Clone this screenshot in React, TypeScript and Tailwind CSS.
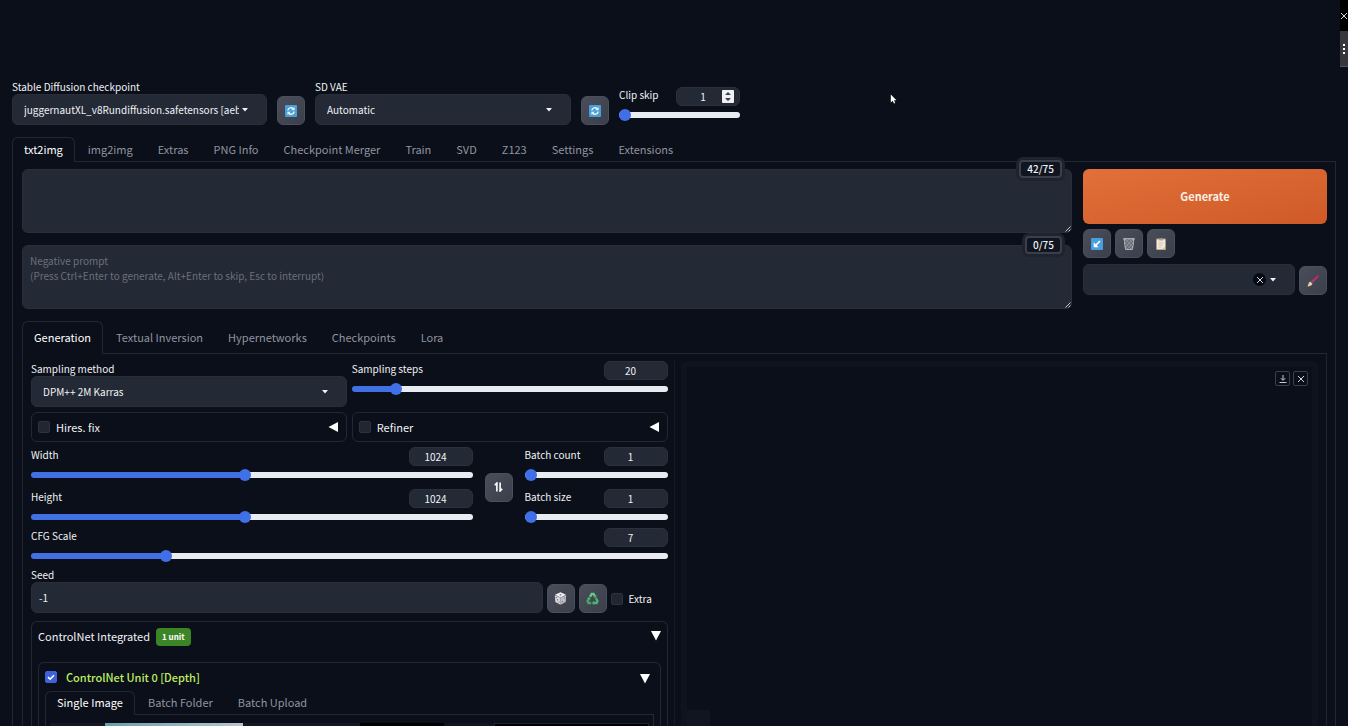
import { useId, useState } from "react";
import type { ReactNode } from "react";
import clsx from "clsx";

const mainTabs = [
  "txt2img",
  "img2img",
  "Extras",
  "PNG Info",
  "Checkpoint Merger",
  "Train",
  "SVD",
  "Z123",
  "Settings",
  "Extensions",
];

const generationTabs = [
  "Generation",
  "Textual Inversion",
  "Hypernetworks",
  "Checkpoints",
  "Lora",
];

const unitTabs = ["Single Image", "Batch Folder", "Batch Upload"];

export default function App() {
  return (
    <div className="relative h-screen overflow-hidden bg-[#0b0f19] px-3 pt-20 font-['Noto_Sans_CJK_SC','Source_Sans_Pro',sans-serif] text-[10px] leading-[14px] text-[#f0f2f6]">
      <QuickSettings />
      <main className="mt-3">
        <TabBar tabs={mainTabs} className="h-[25px]" />
        <div className="border-x border-[#232834] pt-[7px] pr-2 pl-[9px]">
          <PromptArea />
          <div className="mt-3">
            <TabBar tabs={generationTabs} className="h-[33px]" />
            <div className="flex border-x border-[#1f2430] px-2 pt-[7px]">
              <GenerationSettings />
              <Gallery />
            </div>
          </div>
        </div>
      </main>
      <BrowserEdge />
      <Cursor />
    </div>
  );
}

function QuickSettings() {
  return (
    <header className="flex items-end gap-[10px]">
      <div className="w-[255px]">
        <SelectField
          label="Stable Diffusion checkpoint"
          value="juggernautXL_v8Rundiffusion.safetensors [aeb7"
        />
      </div>
      <ToolButton label="Refresh checkpoints">
        <RefreshIcon />
      </ToolButton>
      <div className="w-64">
        <SelectField label="SD VAE" value="Automatic" />
      </div>
      <ToolButton label="Refresh VAE list">
        <RefreshIcon />
      </ToolButton>
      <div className="mb-1 w-[121px]">
        <SliderField label="Clip skip" min={1} max={12} value={1} spinner />
      </div>
    </header>
  );
}

function PromptArea() {
  return (
    <div className="flex gap-[11px]">
      <div className="flex flex-1 flex-col gap-3">
        <PromptBox label="Prompt" counter="42/75" />
        <PromptBox
          label="Negative prompt"
          counter="0/75"
          placeholder={
            "Negative prompt\n(Press Ctrl+Enter to generate, Alt+Enter to skip, Esc to interrupt)"
          }
        />
      </div>
      <div className="w-[244px]">
        <button className="block h-[55px] w-full rounded-md bg-linear-to-br from-[#e2703a] to-[#cf5a27] pb-[2px] text-[11px] font-bold text-[#fbeee6]">
          Generate
        </button>
        <div className="mt-[5px] flex gap-1">
          <ToolButton label="Read generation parameters">
            <ArrowIcon />
          </ToolButton>
          <ToolButton label="Clear prompt">
            <TrashIcon />
          </ToolButton>
          <ToolButton label="Apply styles">
            <ClipboardIcon />
          </ToolButton>
        </div>
        <div className="mt-[6px] flex items-end gap-1">
          <div className="relative flex-1">
            <select
              aria-label="Styles"
              className="block h-[31px] w-full appearance-none rounded-md border border-[#292e3a] bg-[#232935] px-3"
            />
            <button
              aria-label="Clear styles"
              className="absolute top-[9px] right-[29px] grid size-[13px] place-items-center rounded-full bg-[#080b13]"
            >
              <CrossIcon className="size-2" />
            </button>
            <Caret />
          </div>
          <ToolButton label="Edit styles">
            <BrushIcon />
          </ToolButton>
        </div>
      </div>
    </div>
  );
}

function PromptBox({
  label,
  counter,
  placeholder,
}: {
  label: string;
  counter: string;
  placeholder?: string;
}) {
  return (
    <div className="relative">
      <textarea
        aria-label={label}
        placeholder={placeholder}
        className="block h-16 w-full resize-none rounded-md border border-[#292e3a] bg-[#232935] px-[7px] py-[7px] leading-[15px] placeholder:text-[#6a707d]"
      />
      <span className="absolute -top-[9px] right-[10px] rounded border-2 border-[#3a3f4c] bg-[#11151f] px-[6px] font-medium shadow-[0_0_0_3px_#1e232e]">
        {counter}
      </span>
      <svg
        className="absolute right-[1px] bottom-[1px] size-[6px]"
        viewBox="0 0 6 6"
        stroke="#c6c9d0"
      >
        <path d="M0.5 5.5 5.5 0.5M3.5 5.5l2-2" />
      </svg>
    </div>
  );
}

function GenerationSettings() {
  return (
    <div className="w-1/2 shrink-0 border-r border-[#151a25] pr-[6px]">
      <div className="grid grid-cols-2 gap-x-[5px]">
        <div className="pt-[1px]">
          <SelectField label="Sampling method" value="DPM++ 2M Karras" />
        </div>
        <SliderField label="Sampling steps" min={1} max={150} value={20} />
      </div>
      <div className="mt-[5px] grid grid-cols-2 gap-x-[5px]">
        <Accordion label="Hires. fix" />
        <Accordion label="Refiner" />
      </div>
      <div className="mt-[5px] flex items-center">
        <div className="flex flex-1 flex-col gap-2">
          <SliderField label="Width" min={64} max={2048} value={1024} />
          <SliderField label="Height" min={64} max={2048} value={1024} />
        </div>
        <div className="mx-3 mt-1">
          <ToolButton label="Switch width and height">
            <SwapIcon />
          </ToolButton>
        </div>
        <div className="flex w-[143px] flex-col gap-2">
          <SliderField label="Batch count" min={1} max={100} value={1} />
          <SliderField label="Batch size" min={1} max={8} value={1} />
        </div>
      </div>
      <div className="mt-[5px]">
        <SliderField label="CFG Scale" min={1} max={30} value={7} />
      </div>
      <SeedRow />
      <ControlNet />
    </div>
  );
}

function SeedRow() {
  return (
    <div className="mt-[9px] flex items-end gap-1">
      <div className="flex-1">
        <label htmlFor="seed" className="block">
          Seed
        </label>
        <input
          id="seed"
          defaultValue="-1"
          className="block h-[31px] w-full rounded-md border border-[#292e3a] bg-[#232935] px-[7px]"
        />
      </div>
      <ToolButton label="Random seed">
        <DiceIcon />
      </ToolButton>
      <ToolButton label="Reuse seed">
        <RecycleIcon />
      </ToolButton>
      <label className="flex h-[29px] w-[57px] items-center gap-[6px]">
        <Checkbox />
        Extra
      </label>
    </div>
  );
}

function ControlNet() {
  return (
    <section className="mt-2 rounded-t-md border border-b-0 border-[#232834] px-[6px]">
      <div className="flex h-10 pt-[6px] text-[11px]">
        <h2 className="leading-4">ControlNet Integrated</h2>
        <span className="ml-[6px] h-[18px] rounded bg-[#3c8527] px-[6px] text-[8px] leading-[18px] font-bold text-white">
          1 unit
        </span>
        <button
          aria-label="Collapse ControlNet"
          className="ml-auto flex h-4 items-center"
        >
          <Triangle className="-rotate-90" />
        </button>
      </div>
      <div className="rounded-t-md border border-b-0 border-[#232834] px-[6px]">
        <div className="flex h-7 items-center">
          <label className="flex items-center gap-[9px] text-[11px] font-medium text-[#bdee63]">
            <Checkbox checked />
            ControlNet Unit 0 [Depth]
          </label>
          <button
            aria-label="Collapse unit 0"
            className="mt-1 mr-1 ml-auto flex h-4 items-center"
          >
            <Triangle className="-rotate-90" />
          </button>
        </div>
        <TabBar tabs={unitTabs} className="h-6" />
        <div className="flex h-20 border-x border-[#232834] px-1 pt-2">
          <div className="flex flex-1 bg-[#151722]">
            <div className="ml-[55px] h-full w-[138px] bg-linear-to-r from-[#6b9cad] via-[#8fb1bd] to-[#b9c4ca]" />
          </div>
          <div className="w-[84px] bg-black" />
          <div className="w-[50px] bg-[#11131e]" />
          <div className="w-[155px] border border-[#1f2430] bg-black" />
        </div>
      </div>
    </section>
  );
}

function Gallery() {
  return (
    <section
      aria-label="Gallery"
      className="relative ml-[6px] min-w-0 flex-1 rounded-t-md border-x-[6px] border-t-[6px] border-[#10131e]"
    >
      <div className="absolute top-1 right-1 flex gap-[3px]">
        <GalleryButton label="Download">
          <svg
            className="size-2"
            viewBox="0 0 8 8"
            fill="none"
            stroke="currentColor"
          >
            <path d="M4 0v5M1.8 3.2 4 5.4l2.2-2.2M0.5 7.5h7" />
          </svg>
        </GalleryButton>
        <GalleryButton label="Close">
          <CrossIcon className="size-2" />
        </GalleryButton>
      </div>
      <div className="mt-[343px] h-10 w-[23px] bg-[#121420]" />
    </section>
  );
}

function GalleryButton({
  label,
  children,
}: {
  label: string;
  children: ReactNode;
}) {
  return (
    <button
      aria-label={label}
      className="grid size-[15px] place-items-center rounded-xs border border-[#3a3f4b] text-[#c8cbd2]"
    >
      {children}
    </button>
  );
}

function TabBar({ tabs, className }: { tabs: string[]; className: string }) {
  const [active, setActive] = useState(tabs[0]);

  return (
    <div
      role="tablist"
      className={clsx(
        "flex gap-px border-b border-[#232834] text-[11px]",
        className,
      )}
    >
      {tabs.map((tab) => (
        <button
          key={tab}
          role="tab"
          aria-selected={tab === active}
          onClick={() => setActive(tab)}
          className={clsx(
            "-mb-px rounded-t-md border px-[11px] pb-[2px] whitespace-nowrap",
            tab === active
              ? "border-[#232834] border-b-[#0b0f19] text-white"
              : "border-transparent text-[#9094a0]",
          )}
        >
          {tab}
        </button>
      ))}
    </div>
  );
}

function SelectField({ label, value }: { label: string; value: string }) {
  const id = useId();

  return (
    <div>
      <label htmlFor={id} className="block">
        {label}
      </label>
      <div className="relative">
        <select
          id={id}
          className="block h-[31px] w-full appearance-none rounded-md border border-[#292e3a] bg-[#232935] pr-[27px] pl-[11px]"
        >
          <option>{value}</option>
        </select>
        <Caret />
      </div>
    </div>
  );
}

function SliderField({
  label,
  min,
  max,
  value: initial,
  spinner,
}: {
  label: string;
  min: number;
  max: number;
  value: number;
  spinner?: boolean;
}) {
  const id = useId();
  const [value, setValue] = useState(initial);
  const fill = ((value - min) / (max - min)) * 100;

  return (
    <div>
      <div className="flex justify-between">
        <label htmlFor={id} className="pt-[1px]">
          {label}
        </label>
        <div className="relative">
          <input
            type="number"
            aria-label={`${label} value`}
            min={min}
            max={max}
            value={value}
            onChange={(e) => setValue(Number(e.target.value))}
            className="block h-[19px] w-16 [appearance:textfield] rounded-md border border-[#2b303c] bg-[#232935] pr-[10px] text-center leading-[17px] [&::-webkit-inner-spin-button]:appearance-none"
          />
          {spinner ? <Spinner /> : null}
        </div>
      </div>
      <input
        id={id}
        type="range"
        min={min}
        max={max}
        value={value}
        onChange={(e) => setValue(Number(e.target.value))}
        style={{
          backgroundImage: `linear-gradient(to right, #4070e2 ${fill}%, #e9ebf3 ${fill}%)`,
        }}
        className="mt-[6px] mb-[3px] block h-[6px] w-full appearance-none rounded-full [&::-webkit-slider-thumb]:size-3 [&::-webkit-slider-thumb]:appearance-none [&::-webkit-slider-thumb]:rounded-full [&::-webkit-slider-thumb]:bg-[#4070e8]"
      />
    </div>
  );
}

function Accordion({ label }: { label: string }) {
  return (
    <div className="flex h-[30px] items-center justify-between rounded-md border border-[#232834] px-[6px]">
      <label className="flex items-center gap-[6px] text-[11px]">
        <Checkbox />
        {label}
      </label>
      <button aria-label={`Expand ${label}`} className="mr-[2px]">
        <Triangle />
      </button>
    </div>
  );
}

function Checkbox({ checked = false }: { checked?: boolean }) {
  return (
    <span className="relative block size-3">
      <input
        type="checkbox"
        defaultChecked={checked}
        className="peer block size-3 appearance-none rounded-xs border border-[#2d323e] bg-[#222631] checked:border-[#3f62d8] checked:bg-[#3f62d8]"
      />
      <svg
        className="pointer-events-none absolute inset-0 hidden size-3 peer-checked:block"
        viewBox="0 0 12 12"
        fill="none"
        stroke="#fff"
        strokeWidth="1.6"
      >
        <path d="m3 6.2 2.1 2 3.9-4" />
      </svg>
    </span>
  );
}

function ToolButton({
  label,
  children,
}: {
  label: string;
  children: ReactNode;
}) {
  return (
    <button
      aria-label={label}
      className="grid h-[29px] w-7 shrink-0 place-items-center rounded-md border border-[#4b4e5b] bg-linear-to-br from-[#4a4d5a] to-[#3b3e4b]"
    >
      {children}
    </button>
  );
}

function Spinner() {
  return (
    <svg
      className="absolute top-[3px] right-[6px] h-[13px] w-3"
      viewBox="0 0 12 13"
    >
      <rect width="12" height="13" rx="1" fill="#f0f1f5" />
      <path d="M3 5 6 2l3 3zM3 8l3 3 3-3z" fill="#3c3f49" />
    </svg>
  );
}

function Caret() {
  return (
    <svg
      className="pointer-events-none absolute top-[14px] right-[19px] h-1 w-[6px]"
      viewBox="0 0 6 4"
    >
      <path d="M0 0h6L3 3.5z" fill="#f1f2f5" />
    </svg>
  );
}

function Triangle({ className }: { className?: string }) {
  return (
    <svg className={clsx("size-[10px]", className)} viewBox="0 0 10 10">
      <path d="M10 0v10L0.5 5z" fill="#fff" />
    </svg>
  );
}

function CrossIcon({ className }: { className: string }) {
  return (
    <svg className={className} viewBox="0 0 8 8" stroke="#d3d6dc">
      <path d="m1 1 6 6M7 1 1 7" />
    </svg>
  );
}

function RefreshIcon() {
  return (
    <svg className="size-3" viewBox="0 0 12 12" fill="none">
      <rect width="12" height="12" rx="1" fill="#4a9fd6" />
      <path
        d="M2.8 5.4a3.3 3.3 0 0 1 5.6-1.7M9.2 6.6a3.3 3.3 0 0 1-5.6 1.7"
        stroke="#e8f5fc"
        strokeWidth="1.5"
      />
      <path d="M9.6 1.9v3.3H6.3zM2.4 10.1V6.8h3.3z" fill="#e8f5fc" />
    </svg>
  );
}

function ArrowIcon() {
  return (
    <svg className="size-3" viewBox="0 0 12 12" fill="none">
      <rect width="12" height="12" rx="1" fill="#489fdd" />
      <path d="M9 3 4.5 7.5" stroke="#fff" strokeWidth="1.7" />
      <path d="M2.7 4.3v5h5z" fill="#fff" />
    </svg>
  );
}

function TrashIcon() {
  return (
    <svg className="size-3" viewBox="0 0 12 12" fill="none" stroke="#b4b6be">
      <path d="M1 1h10l-1.3 10.5H2.3z" fill="#8a8c95" stroke="none" />
      <path d="M0.3 0.8h11.4" strokeWidth="1.4" />
      <path d="m1.2 1 1.3 10.4h7L10.8 1" />
      <path
        d="m1.7 3 7.6 8M4.5 1l5.3 6M7.5 1l2.8 3M10.3 3 2.7 11M7.5 1 2.2 7M4.5 1 1.7 4M6 11l3.7-4M6 11 2.2 7"
        stroke="#555863"
        strokeWidth="0.6"
      />
    </svg>
  );
}

function ClipboardIcon() {
  return (
    <svg className="size-3" viewBox="0 0 12 12">
      <rect x="1" y="0.5" width="10" height="11.5" rx="1" fill="#b99b70" />
      <path d="M2 1.5h8v9.7H2z" fill="#efe9df" />
      <path d="M4 0.5h4v2H4z" fill="#a6a5a5" />
      <path d="M3.5 5h5M3.5 7h4M3.5 9h3" stroke="#c3b9a8" strokeWidth="0.7" />
      <path d="M10 8.5v2.7H7.2z" fill="#d2c3a8" />
    </svg>
  );
}

function BrushIcon() {
  return (
    <svg className="size-3" viewBox="0 0 12 12" fill="none">
      <path
        d="M10.8 1.2 6.3 6"
        stroke="#c22a6d"
        strokeWidth="2"
        strokeLinecap="round"
      />
      <path d="m6.6 5.2-2 2" stroke="#8b4a68" strokeWidth="2.4" />
      <path
        d="M3.2 6.5 5.5 8.8C4.8 10.8 2.4 11.6 0.5 11.5 1.4 10 1 7.8 3.2 6.5z"
        fill="#e9c9a6"
      />
    </svg>
  );
}

function SwapIcon() {
  return (
    <svg className="h-[10px] w-[9px]" viewBox="0 0 9 10" fill="none">
      <path
        d="M2.9 9.5V1M0.8 3.2 2.9 1v4M6.1 0.5V9M6.1 5v4l2.1-2.2"
        stroke="#fff"
        strokeWidth="1.6"
      />
    </svg>
  );
}

function DiceIcon() {
  return (
    <svg className="size-[13px]" viewBox="0 0 13 13">
      <path d="M6.5 0.3 12 2.8 6.5 5.6 1 2.8z" fill="#f2f2f5" />
      <path d="M0.8 3.3 6.5 5.8v7L1.3 10z" fill="#d5d5da" />
      <path d="M12.2 3.3 6.5 5.8v7l5.2-2.8z" fill="#bcbdc4" />
      <g fill="#5c5d66">
        <ellipse cx="6.5" cy="2.8" rx="1.1" ry="0.6" />
        <circle cx="2.3" cy="5.6" r="0.6" />
        <circle cx="3.6" cy="7.8" r="0.6" />
        <circle cx="4.9" cy="10" r="0.6" />
        <circle cx="10.6" cy="6" r="0.6" />
        <circle cx="8.3" cy="9.6" r="0.6" />
      </g>
    </svg>
  );
}

function RecycleIcon() {
  return (
    <svg
      className="size-[13px]"
      viewBox="0 0 13 13"
      fill="none"
      stroke="#4cb66f"
      strokeWidth="2.4"
    >
      <path d="M4 4.8 5.7 1.9h1.8l1.3 2.2" stroke="#65c986" />
      <path d="M10 6.3l1.5 2.9-1 1.8H7.6" />
      <path d="M5.2 11H2.5l-1-1.8L3 6.6" stroke="#3fa862" />
      <path
        d="M10.4 2.8v3H7.3zM8 8.8v4.2L5.9 11zM0.9 6.9 3 4.8l2 2.6z"
        fill="#4cb66f"
        stroke="none"
      />
    </svg>
  );
}

/* Sliver of the side bar that sits over the right edge of the page. */
function BrowserEdge() {
  return (
    <aside className="absolute inset-y-0 right-0 w-2">
      <button
        aria-label="Close panel"
        className="flex h-[31px] w-2 items-center bg-black"
      >
        <CrossIcon className="size-2" />
      </button>
      <button
        aria-label="More options"
        className="flex h-9 w-2 flex-col items-center justify-center gap-[2px] border-b border-[#55585f] bg-[#36383d]"
      >
        <span className="size-[2px] bg-white" />
        <span className="size-[2px] bg-white" />
        <span className="size-[2px] bg-white" />
      </button>
    </aside>
  );
}

function Cursor() {
  return (
    <svg
      className="pointer-events-none absolute top-[94px] left-[890px] h-[10px] w-[7px]"
      viewBox="0 0 7 10"
    >
      <path d="M0.8 0.5v8l1.9-1.7 1.3 2.8 1.2-.6-1.2-2.7h2.4z" fill="#fff" />
    </svg>
  );
}
